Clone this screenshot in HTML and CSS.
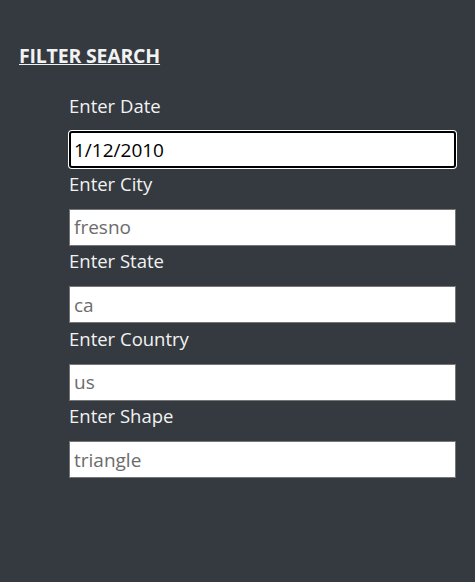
FILE: index.html
```html
<!DOCTYPE html>
<html>
<head>
<meta charset="utf-8">
<link rel="stylesheet" href="styles.css">
</head>
<body>
<div class="page">
  <h2 class="title">FILTER SEARCH</h2>
  <form class="filters">
    <label class="field-label" for="date">Enter Date</label>
    <input class="field-input focused" id="date" type="text" value="1/12/2010">
    <label class="field-label" for="city">Enter City</label>
    <input class="field-input" id="city" type="text" value="fresno">
    <label class="field-label" for="state">Enter State</label>
    <input class="field-input" id="state" type="text" value="ca">
    <label class="field-label" for="country">Enter Country</label>
    <input class="field-input" id="country" type="text" value="us">
    <label class="field-label" for="shape">Enter Shape</label>
    <input class="field-input" id="shape" type="text" value="triangle">
  </form>
</div>
</body>
</html>
```

FILE: styles.css
```css
html, body {
  margin: 0;
  padding: 0;
  background: #343a40;
  height: 100%;
}
.page {
  font-family: "Open Sans", "Noto Sans", sans-serif;
  color: #f2f2f2;
  padding: 43px 19px 0 19px;
}
.title {
  margin: 0 0 24px 0;
  font-size: 19.5px;
  font-weight: 700;
  text-decoration: underline;
  line-height: 26px;
  color: #f2f2f2;
  letter-spacing: -0.2px;
}
.filters {
  display: flex;
  flex-direction: column;
  margin-left: 50px;
  width: 387px;
}
.field-label {
  font-size: 18.5px;
  line-height: 26px;
  margin-bottom: 12px;
  margin-top: 0;
}
.filters .field-input + .field-label {
  margin-top: 2.5px;
}
.field-input {
  box-sizing: border-box;
  height: 37px;
  width: 387px;
  margin: 0;
  padding: 0 4px;
  border: 1px solid #767676;
  background: #fff;
  font-family: "Open Sans", "Noto Sans", sans-serif;
  font-size: 19px;
  color: #6c6c6c;
  outline: none;
}
.field-input.focused {
  color: #000;
  border: 2px solid #000;
  border-radius: 3px;
  padding: 0 3px;
  box-shadow: 0 0 0 1px #fff;
}
```
